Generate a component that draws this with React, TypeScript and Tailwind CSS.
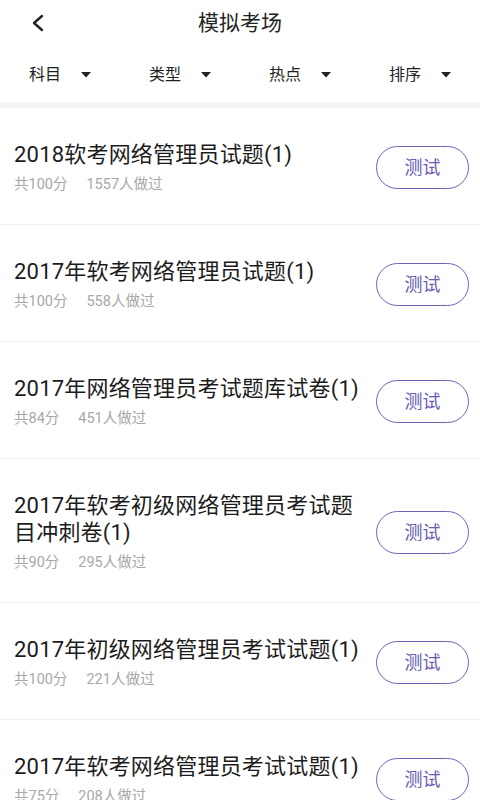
const exams = [
  { title: '2018软考网络管理员试题(1)', score: 100, done: 1557 },
  { title: '2017年软考网络管理员试题(1)', score: 100, done: 558 },
  { title: '2017年网络管理员考试题库试卷(1)', score: 84, done: 451 },
  { title: '2017年软考初级网络管理员考试题目冲刺卷(1)', score: 90, done: 295 },
  { title: '2017年初级网络管理员考试试题(1)', score: 100, done: 221 },
  { title: '2017年软考网络管理员考试试题(1)', score: 75, done: 208 },
];

const filters = ['科目', '类型', '热点', '排序'];

export default function App() {
  return (
    <div
      className="h-[800px] w-[480px] overflow-hidden bg-white"
      style={{ fontFamily: 'Roboto, "Noto Sans CJK SC", sans-serif' }}
    >
      {/* header */}
      <div className="relative flex h-[48px] items-center justify-center">
        <button className="absolute left-[30px] top-[13px] flex h-[20px] w-[16px] items-center justify-center">
          <svg width="14" height="18" viewBox="0 0 14 18" fill="none">
            <polyline points="11,2 3,9 11,16" stroke="#222" strokeWidth="2.4" strokeLinecap="round" strokeLinejoin="round" />
          </svg>
        </button>
        <h1 className="text-[21px] text-[#222]">模拟考场</h1>
      </div>

      {/* filters */}
      <div className="grid h-[54px] grid-cols-4">
        {filters.map((f) => (
          <div key={f} className="flex items-center justify-center gap-[20px]">
            <span className="text-[16px] text-[#222]">{f}</span>
            <svg width="10" height="6" viewBox="0 0 10 6">
              <polygon points="0,0 10,0 5,5.5" fill="#222" />
            </svg>
          </div>
        ))}
      </div>

      <div className="h-[6px] bg-[#f5f5f5]" />

      {/* list */}
      <div>
        {exams.map((e) => (
          <div key={e.title} className="flex items-center border-b border-[#f1f1f1] pb-[30px] pl-[14px] pr-[11px] pt-[33px]">
            <div className="mr-[10px] min-w-0 flex-1">
              <div className="text-[22px] leading-[27px] tracking-[0.2px] text-[#1c1c1c]">{e.title}</div>
              <div className="mt-[8px] flex gap-[19px] text-[14.5px] leading-[18px] text-[#a8a8a8]">
                <span>共{e.score}分</span>
                <span>{e.done}人做过</span>
              </div>
            </div>
            <button className="flex h-[43px] w-[93px] shrink-0 items-center justify-center rounded-full border-[1.5px] border-[#6e62b6] text-[18px] text-[#6a5bb3]">
              测试
            </button>
          </div>
        ))}
      </div>
    </div>
  );
}
